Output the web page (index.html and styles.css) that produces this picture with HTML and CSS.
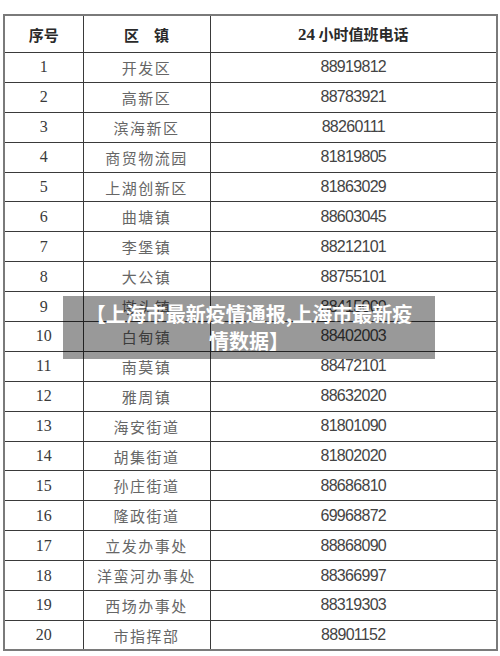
FILE: index.html
```html
<!DOCTYPE html>
<html lang="zh">
<head>
<meta charset="utf-8">
<title>上海市最新疫情通报</title>
<link rel="stylesheet" href="styles.css">
</head>
<body>
<div class="page">
  <table class="duty">
    <colgroup>
      <col class="c-no">
      <col class="c-area">
      <col class="c-tel">
    </colgroup>
    <thead>
      <tr class="head">
        <th>序号</th>
        <th>区　镇</th>
        <th><span class="num">24</span> 小时值班电话</th>
      </tr>
    </thead>
    <tbody>
      <tr><td class="no">1</td><td class="area">开发区</td><td class="tel">88919812</td></tr>
      <tr><td class="no">2</td><td class="area">高新区</td><td class="tel">88783921</td></tr>
      <tr><td class="no">3</td><td class="area">滨海新区</td><td class="tel">88260111</td></tr>
      <tr><td class="no">4</td><td class="area">商贸物流园</td><td class="tel">81819805</td></tr>
      <tr><td class="no">5</td><td class="area">上湖创新区</td><td class="tel">81863029</td></tr>
      <tr><td class="no">6</td><td class="area">曲塘镇</td><td class="tel">88603045</td></tr>
      <tr><td class="no">7</td><td class="area">李堡镇</td><td class="tel">88212101</td></tr>
      <tr><td class="no">8</td><td class="area">大公镇</td><td class="tel">88755101</td></tr>
      <tr><td class="no">9</td><td class="area">墩头镇</td><td class="tel">88415000</td></tr>
      <tr><td class="no">10</td><td class="area">白甸镇</td><td class="tel">88402003</td></tr>
      <tr><td class="no">11</td><td class="area">南莫镇</td><td class="tel">88472101</td></tr>
      <tr><td class="no">12</td><td class="area">雅周镇</td><td class="tel">88632020</td></tr>
      <tr><td class="no">13</td><td class="area">海安街道</td><td class="tel">81801090</td></tr>
      <tr><td class="no">14</td><td class="area">胡集街道</td><td class="tel">81802020</td></tr>
      <tr><td class="no">15</td><td class="area">孙庄街道</td><td class="tel">88686810</td></tr>
      <tr><td class="no">16</td><td class="area">隆政街道</td><td class="tel">69968872</td></tr>
      <tr><td class="no">17</td><td class="area">立发办事处</td><td class="tel">88868090</td></tr>
      <tr><td class="no">18</td><td class="area">洋蛮河办事处</td><td class="tel">88366997</td></tr>
      <tr><td class="no">19</td><td class="area">西场办事处</td><td class="tel">88319303</td></tr>
      <tr><td class="no">20</td><td class="area">市指挥部</td><td class="tel">88901152</td></tr>
    </tbody>
  </table>
  <div class="caption">【上海市最新疫情通报,上海市最新疫情数据】</div>
</div>
</body>
</html>
```

FILE: styles.css
```css
html, body {
  margin: 0;
  padding: 0;
  background: #ffffff;
}

.page {
  position: relative;
  width: 500px;
  height: 656px;
  padding: 14px 0 0 3px;
  box-sizing: border-box;
}

.duty {
  width: 493px;
  table-layout: fixed;
  border-collapse: collapse;
  border: 2px solid #7a7a7a;
}

.c-no { width: 79px; }
.c-area { width: 127px; }
.c-tel { width: 287px; }

.duty th,
.duty td {
  border: 1px solid #3a3a3a;
  padding: 0;
  text-align: center;
  vertical-align: middle;
  white-space: nowrap;
}

.head {
  height: 37.5px;
}

.head th {
  font-family: "Noto Sans CJK SC", sans-serif;
  font-weight: 700;
  font-size: 15px;
  color: #2a2a2a;
}

.head .num {
  font-family: "Liberation Serif", serif;
  font-size: 17px;
  font-weight: 700;
}

.duty tbody tr {
  height: 29.9px;
}

.no {
  font-family: "Liberation Serif", serif;
  font-size: 16px;
  color: #3a3a3a;
  padding-top: 2px;
}

.area {
  font-family: "Noto Sans CJK SC", sans-serif;
  font-size: 15px;
  letter-spacing: 1.5px;
  color: #666666;
}

.tel {
  font-family: "Liberation Sans", sans-serif;
  font-size: 16px;
  letter-spacing: -0.7px;
  color: #444444;
  padding-top: 1px;
}

.caption {
  position: absolute;
  left: 63px;
  top: 296px;
  width: 372px;
  height: 63px;
  box-sizing: border-box;
  padding: 4px 16px 5px;
  background: rgba(0, 0, 0, 0.4);
  color: #ffffff;
  font-family: "Noto Sans CJK SC", sans-serif;
  font-weight: 700;
  font-size: 20px;
  line-height: 27px;
  text-align: center;
}
```
